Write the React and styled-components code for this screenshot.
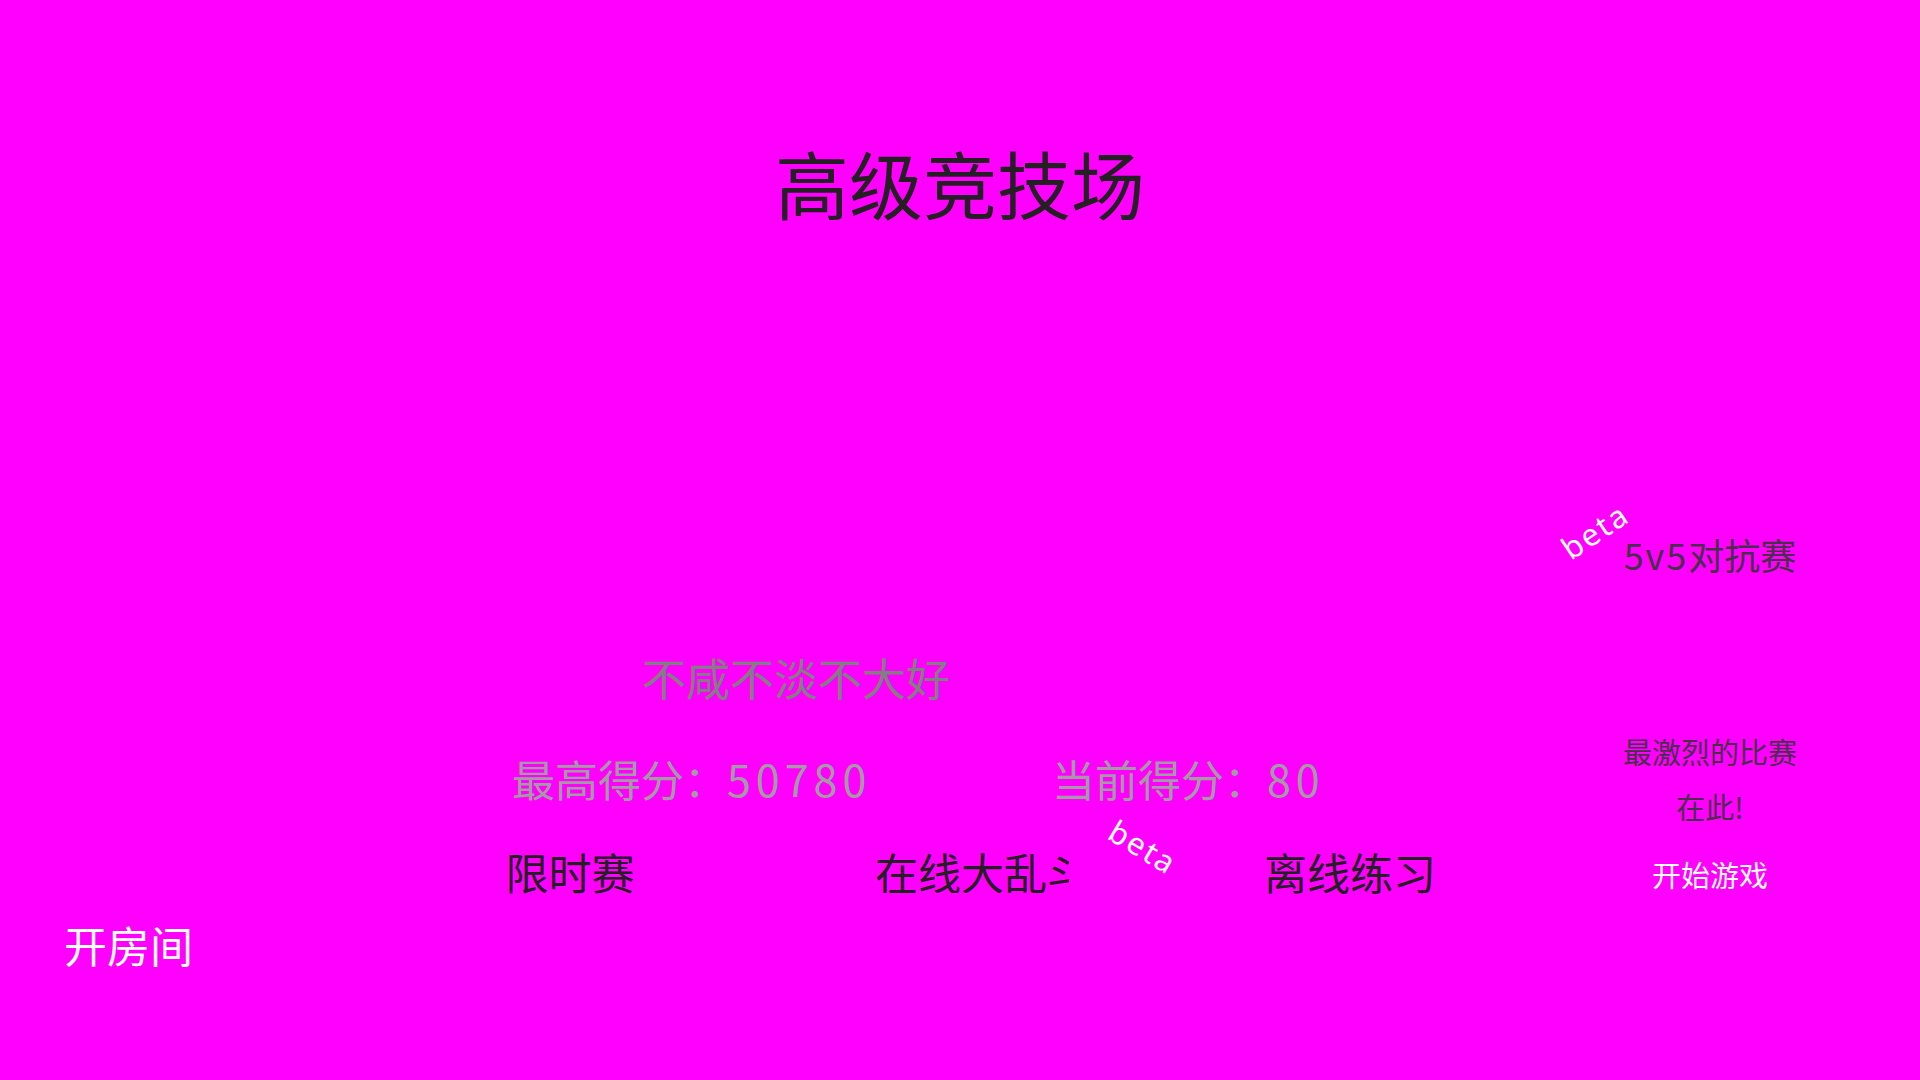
import React from "react";
import styled, { createGlobalStyle } from "styled-components";

const GlobalStyle = createGlobalStyle`
  html, body {
    margin: 0;
    padding: 0;
    background: #ff00ff;
  }
  body {
    font-family: "Noto Sans CJK SC", "Noto Sans", sans-serif;
  }
`;

const Page = styled.div`
  width: 1920px;
  height: 1080px;
  overflow: hidden;
  background: #ff00ff;
`;

const Title = styled.h1`
  margin: 0;
  padding-top: 145px;
  font-size: 74px;
  line-height: 74px;
  font-weight: 400;
  text-align: center;
  color: #231f23;
`;

const Stage = styled.div`
  display: flex;
  align-items: flex-start;
`;

const LeftArea = styled.div`
  flex: 1;
  display: flex;
  flex-direction: column;
`;

const Tagline = styled.div`
  margin-top: 436px;
  padding-left: 642px;
  font-size: 44px;
  line-height: 44px;
  color: #808080;
`;

const ScoreRow = styled.div`
  margin-top: 58px;
  padding-left: 512px;
  display: flex;
`;

const Score = styled.div`
  width: ${(p) => p.$width}px;
  font-size: 43px;
  line-height: 43px;
  color: #a39ba3;
  white-space: nowrap;
`;

const Num = styled.span`
  letter-spacing: 5px;
`;

const ButtonRow = styled.div`
  margin-top: 50px;
  padding-left: 375px;
  display: flex;
`;

const Slot = styled.div`
  position: relative;
  width: 390px;
  text-align: center;
`;

const ModeButton = styled.div`
  font-size: 43px;
  line-height: 43px;
  color: #231f23;
  cursor: pointer;
`;

// the middle label is cut off by its own box in the original
const ClippedButton = styled(ModeButton)`
  width: 194px;
  margin-left: 110px;
  overflow: hidden;
  white-space: nowrap;
  text-align: left;
`;

const Badge = styled.span`
  position: absolute;
  left: ${(p) => p.$x}px;
  top: ${(p) => p.$y}px;
  transform: translate(-50%, -50%) rotate(${(p) => p.$angle}deg);
  font-family: "Noto Sans", "DejaVu Sans", sans-serif;
  font-size: 31px;
  line-height: 31px;
  font-weight: 400;
  letter-spacing: 2px;
  color: #ffffff;
  white-space: nowrap;
`;

const RoomButton = styled.div`
  margin-top: 30px;
  padding-left: 64px;
  font-size: 43px;
  line-height: 43px;
  color: #ffffff;
  cursor: pointer;
`;

const Card = styled.div`
  width: 300px;
  margin-right: 60px;
  display: flex;
  flex-direction: column;
  align-items: stretch;
  text-align: center;
`;

const CardHead = styled.div`
  position: relative;
  margin-top: 317px;
  font-size: 36px;
  line-height: 36px;
  color: #4a2f4c;
`;

const HeadNum = styled.span`
  letter-spacing: 2px;
`;

const CardText = styled.div`
  margin-top: ${(p) => p.$gap}px;
  font-size: 29px;
  line-height: 29px;
  color: #4a2f4c;
`;

const StartButton = styled.div`
  margin-top: 39px;
  font-size: 29px;
  line-height: 29px;
  color: #ffffff;
  cursor: pointer;
`;

export default function App() {
  return (
    <Page>
      <GlobalStyle />
      <Title>高级竞技场</Title>
      <Stage>
        <LeftArea>
          <Tagline>不咸不淡不大好</Tagline>
          <ScoreRow>
            <Score $width={540}>
              最高得分：<Num>50780</Num>
            </Score>
            <Score $width={300}>
              当前得分：<Num>80</Num>
            </Score>
          </ScoreRow>
          <ButtonRow>
            <Slot>
              <ModeButton>限时赛</ModeButton>
            </Slot>
            <Slot>
              <ClippedButton>在线大乱斗</ClippedButton>
              <Badge $x={378} $y={-3} $angle={31}>
                beta
              </Badge>
            </Slot>
            <Slot>
              <ModeButton>离线练习</ModeButton>
            </Slot>
          </ButtonRow>
          <RoomButton>开房间</RoomButton>
        </LeftArea>
        <Card>
          <CardHead>
            <HeadNum>5v5</HeadNum>对抗赛
            <Badge $x={35} $y={-5} $angle={-34}>
              beta
            </Badge>
          </CardHead>
          <CardText $gap={165}>最激烈的比赛</CardText>
          <CardText $gap={26}>在此!</CardText>
          <StartButton>开始游戏</StartButton>
        </Card>
      </Stage>
    </Page>
  );
}
